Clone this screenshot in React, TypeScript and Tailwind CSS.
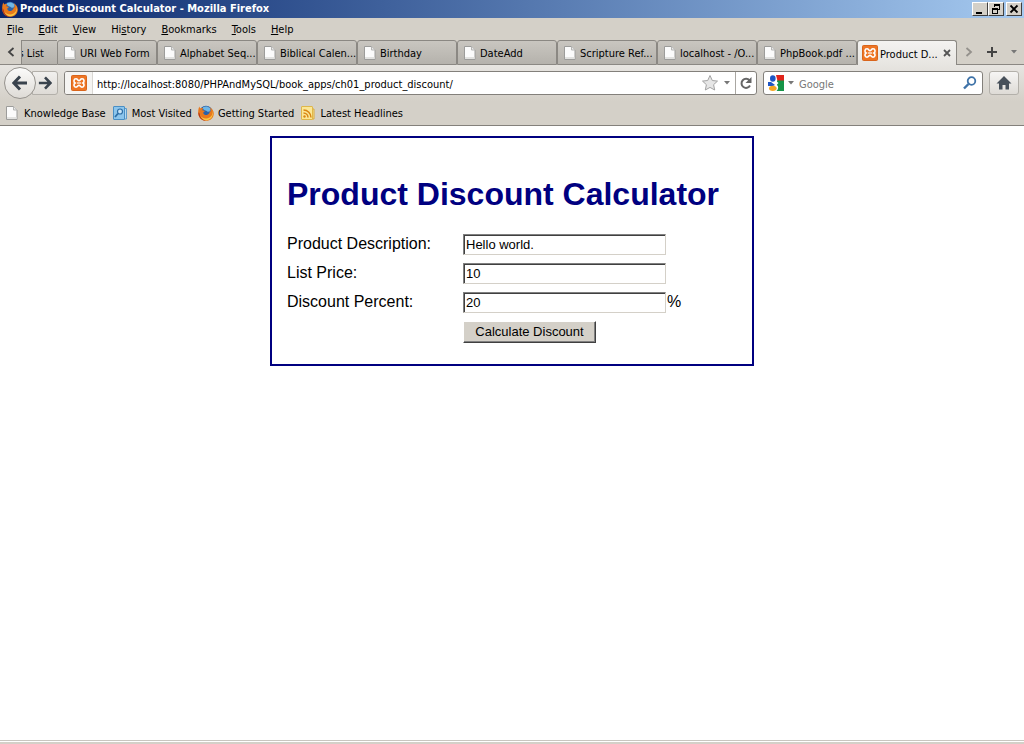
import React, { useState } from "react";

function FirefoxIcon() {
  return (
    <svg viewBox="0 0 16 16" className="size-4 shrink-0" aria-hidden="true">
      <circle cx="8" cy="7.6" r="6.800" fill="#2b62a8" />
      <path d="M5 2.200C7 1 10 1 12 3c1 1.200.8 3-.6 3.600-2 .6-2.400-.8-4-1.200C6 5 4.600 4 5 2.200z" fill="#6fb7e6" />
      <path
        d="M1.300 1.600c.3 1 .7 1.500 1.300 1.900C3.600 3 4.700 3.100 5.200 3.200c-.6.6-.9 1.300-.8 2 .8.300 2 .2 2.600.6-.1.900-1.500 1.100-1.800 1.900.3 1.800 2.400 2.700 4.200 2.100 1.800-.6 2.800-2.400 2.300-4.200.6.400.9.900 1.100 1.500.2-2-.3-3.800-1.500-5.200 2.600 1.200 4.500 3.800 4.500 6.500 0 4.300-3.400 7.400-7.600 7.400C3.800 15.800.4 12.600.2 8.500.1 5.800.4 3.600 1.300 1.600z"
        fill="#e8781c"
      />
      <path d="M14.300 4.200c1.600 4.500-1.300 9-5.800 9.300-3 .2-5.400-1.200-6.500-3.400 1 4 4.300 5.300 6.600 5.200 5-.3 7.900-6 5.700-11.100z" fill="#f9c642" />
      <path d="M.4 7.200c-.3 5 3.400 8.500 7.600 8.600-3.600-1-6-3.400-6.400-7.400z" fill="#b5391a" />
    </svg>
  );
}

function XamppIcon() {
  return (
    <svg viewBox="0 0 16 16" className="size-4 shrink-0" aria-hidden="true">
      <rect x=".5" y=".5" width="15" height="15" rx="1" fill="#ee7524" stroke="#d9651c" />
      <path
        d="M5 3.800c1.800 0 1.800 1.900 3 1.900s1.200-1.900 3-1.900c2.500 0 2.600 3.200.9 4.200 1.700 1 1.600 4.200-.9 4.200-1.800 0-1.800-1.900-3-1.900s-1.200 1.900-3 1.900c-2.500 0-2.600-3.200-.9-4.200-1.700-1-1.600-4.200.9-4.200z"
        fill="none"
        stroke="#fff"
        strokeWidth="1.600"
      />
      <path d="M6 8h4" stroke="#fff" strokeWidth="1.200" />
    </svg>
  );
}

function PageIcon() {
  return (
    <svg viewBox="0 0 16 16" className="size-4 shrink-0" aria-hidden="true">
      <path d="M2.500 1.500h7l3.500 3.500v9.500H2.500z" fill="#fbfbfb" stroke="#9c9c9a" />
      <path d="M3 12h9.500v2H3z" fill="#e2e2e0" />
      <path d="M9.500 1.500V5H13" fill="#e8e8e8" stroke="#b5b5b3" />
    </svg>
  );
}

function MostVisitedIcon() {
  return (
    <svg viewBox="0 0 16 16" className="size-4 shrink-0" aria-hidden="true">
      <path d="M12 3.500h2.500v10.500H12z" fill="#b5d9f2" stroke="#5d9ccb" />
      <rect x="1.500" y="1.500" width="11" height="13" rx=".5" fill="#8cc5ec" stroke="#4a8fc4" />
      <circle cx="8" cy="6.500" r="2.500" fill="#c8e4f7" stroke="#2d6ea6" strokeWidth="1.200" />
      <path d="M6 8.500l-3 3.500" stroke="#2d6ea6" strokeWidth="1.800" />
    </svg>
  );
}

function FeedIcon() {
  return (
    <svg viewBox="0 0 16 16" className="size-4 shrink-0" aria-hidden="true">
      <path d="M12 4h2v10h-2z" fill="#f8e39b" stroke="#d9a93a" />
      <rect x="1.500" y="1.500" width="11" height="13" rx=".5" fill="#fbe796" stroke="#dfb74a" />
      <circle cx="4.500" cy="11.500" r="1.200" fill="#d98512" />
      <path d="M3.500 8a4.500 4.500 0 0 1 4.500 4.500M3.500 5a7.500 7.500 0 0 1 7.500 7.500" fill="none" stroke="#d98512" strokeWidth="1.500" />
    </svg>
  );
}

function GoogleIcon() {
  return (
    <svg viewBox="0 0 16 16" className="size-4 shrink-0" aria-hidden="true">
      <path d="M8 0h8v6H9.500z" fill="#e0241b" />
      <path d="M9 5.500h7V16H8.500c2-2 2.300-4.500.5-6z" fill="#159447" />
      <path d="M0 7h3l4 3-2 1H0z" fill="#1f56c3" />
      <ellipse cx="4.800" cy="3.500" rx="2.800" ry="3.300" fill="#1f56c3" />
      <ellipse cx="4.800" cy="13.300" rx="3.800" ry="2.600" fill="#f5a623" />
      <path d="M7.500 5.500l3 2.500-2 2-2.500-2z" fill="#fff" />
    </svg>
  );
}

function Arrow({ back = false }: { back?: boolean }) {
  return (
    <svg viewBox="0 0 16 16" className={back ? "size-4" : "size-[14px] rotate-180"} aria-hidden="true">
      <path d="M8 1.500L1.800 8 8 14.500M2.500 8H15" fill="none" stroke="#39434d" strokeWidth="3" />
    </svg>
  );
}

function Caret() {
  return (
    <svg viewBox="0 0 6 4" className="h-1 w-[6px] shrink-0" aria-hidden="true">
      <path d="M0 0h6L3 3.500z" fill="#777" />
    </svg>
  );
}

const menus = [
  ["", "F", "ile"],
  ["", "E", "dit"],
  ["", "V", "iew"],
  ["Hi", "s", "tory"],
  ["", "B", "ookmarks"],
  ["", "T", "ools"],
  ["", "H", "elp"],
];

const tabs = [
  "URI Web Form",
  "Alphabet Seq...",
  "Biblical Calen...",
  "Birthday",
  "DateAdd",
  "Scripture Ref...",
  "localhost - /O...",
  "PhpBook.pdf ...",
];

const bookmarks = [
  { label: "Knowledge Base", icon: <PageIcon /> },
  { label: "Most Visited", icon: <MostVisitedIcon /> },
  { label: "Getting Started", icon: <FirefoxIcon /> },
  { label: "Latest Headlines", icon: <FeedIcon /> },
];

const captionButton =
  "flex h-[14px] w-4 items-center justify-center border border-t-white border-l-white border-r-[#404040] border-b-[#404040] bg-[#d4d0c8]";

function TitleBar() {
  return (
    <header className="flex h-[18px] items-center bg-linear-to-r from-[#0a246a] to-[#a6caf0] pr-[2px] pl-[2px]">
      <FirefoxIcon />
      <h2 className="ml-[2px] flex-1 text-[11px] font-bold whitespace-nowrap text-white">
        Product Discount Calculator - Mozilla Firefox
      </h2>
      <button type="button" aria-label="Minimize" className={captionButton}>
        <svg viewBox="0 0 12 12" className="size-3" aria-hidden="true">
          <path d="M2 9h6v2H2z" />
        </svg>
      </button>
      <button type="button" aria-label="Restore" className={captionButton}>
        <svg viewBox="0 0 12 12" className="size-3" shapeRendering="crispEdges" aria-hidden="true">
          <path d="M4 1h6v6H8V6h1V3H5v1H4zM2 5h6v6H2zm1 2v3h4V7z" fillRule="evenodd" />
        </svg>
      </button>
      <button type="button" aria-label="Close" className={`${captionButton} ml-[2px]`}>
        <svg viewBox="0 0 12 12" className="size-3" aria-hidden="true">
          <path d="M2.500 2.500l7 7M9.500 2.500l-7 7" stroke="#000" strokeWidth="1.800" />
        </svg>
      </button>
    </header>
  );
}

const tabShape =
  "flex h-full min-w-0 flex-1 items-center rounded-t-[3px] border-t border-r border-l border-[#8b8883] pl-1 text-left whitespace-nowrap";

function TabStrip() {
  return (
    <div className="flex h-[25px]">
      <button type="button" aria-label="Scroll tabs left" className="flex w-[21px] items-center justify-center border-b border-[#8b8883]">
        <svg viewBox="0 0 8 10" className="h-[10px] w-2" aria-hidden="true">
          <path d="M6.500 1L2 5l4.500 4" fill="none" stroke="#444" strokeWidth="1.800" />
        </svg>
      </button>
      <div role="tablist" className="flex min-w-0 flex-1">
        <button
          type="button"
          role="tab"
          aria-selected={false}
          className="flex h-full w-9 shrink-0 items-center justify-end overflow-hidden border-t border-b border-l border-[#8b8883] bg-linear-to-b from-[#c9c6c0] to-[#b5b2ac] pr-[13px] whitespace-nowrap"
        >
          <span className="mt-[3px]">s List</span>
        </button>
        {tabs.map((t) => (
          <button
            type="button"
            role="tab"
            aria-selected={false}
            key={t}
            className={`${tabShape} border-b bg-linear-to-b from-[#c9c6c0] to-[#b5b2ac]`}
          >
            <PageIcon />
            <span className="mt-[3px] ml-[2px]">{t}</span>
          </button>
        ))}
        <div className={`${tabShape} bg-linear-to-b from-[#f4f3f1] to-[#e7e5e1]`}>
          <button type="button" role="tab" aria-selected={true} className="flex items-center">
            <XamppIcon />
            <span className="mt-[3px] ml-[2px]">Product D...</span>
          </button>
          <button type="button" aria-label="Close tab" className="flex flex-1 items-center justify-center">
            <svg viewBox="0 0 8 8" className="size-2" aria-hidden="true">
              <path d="M1 1l6 6M7 1L1 7" stroke="#555" strokeWidth="1.800" />
            </svg>
          </button>
        </div>
      </div>
      <div className="flex w-[67px] items-center justify-between border-b border-[#8b8883] pr-[7px] pl-2">
        <button type="button" aria-label="Scroll tabs right">
          <svg viewBox="0 0 8 10" className="h-[10px] w-2" aria-hidden="true">
            <path d="M1.500 1L6 5 1.500 9" fill="none" stroke="#94918c" strokeWidth="1.800" />
          </svg>
        </button>
        <button type="button" aria-label="Open a new tab">
          <svg viewBox="0 0 10 10" className="size-[10px]" aria-hidden="true">
            <path d="M5 0v10M0 5h10" stroke="#444" strokeWidth="2" />
          </svg>
        </button>
        <button type="button" aria-label="List all tabs">
          <Caret />
        </button>
      </div>
    </div>
  );
}

function NavBar() {
  const [url, setUrl] = useState("http://localhost:8080/PHPAndMySQL/book_apps/ch01_product_discount/");
  const [query, setQuery] = useState("");
  return (
    <div className="flex h-9 items-center bg-linear-to-b from-[#e7e5e1] to-[#d4d0c8] pr-[5px] pl-1">
      <button
        type="button"
        aria-label="Back"
        className="z-10 flex size-8 shrink-0 items-center justify-center rounded-full border border-[#96938e] bg-linear-to-b from-[#fbfbfa] to-[#dedbd6]"
      >
        <Arrow back />
      </button>
      <button
        type="button"
        aria-label="Forward"
        className="-ml-1 flex h-6 w-[26px] shrink-0 items-center justify-center rounded-r-[3px] border border-[#b3b0aa] bg-linear-to-b from-[#f1f0ee] to-[#dedbd6]"
      >
        <Arrow />
      </button>
      <div className="ml-[6px] flex h-6 min-w-0 flex-1 items-center rounded-[3px] border border-[#83807b] bg-white">
        <div className="flex h-full w-7 shrink-0 items-center justify-center rounded-l-[2px] border-r border-[#d9d7d3] bg-[#f5f4f2]">
          <XamppIcon />
        </div>
        <input
          aria-label="Address"
          value={url}
          onChange={(e) => setUrl(e.target.value)}
          className="h-full min-w-0 flex-1 bg-transparent pt-[2px] pl-1 outline-none"
        />
        <button type="button" aria-label="Bookmark this page">
          <svg viewBox="0 0 18 18" className="size-[18px]" aria-hidden="true">
            <path d="M9 1.500l2.300 5 5.200.6-3.900 3.600 1.100 5.300L9 13.400 4.300 16l1.100-5.300L1.500 7.100l5.200-.6z" fill="#e6e6e6" stroke="#a3a3a3" />
          </svg>
        </button>
        <button type="button" aria-label="Show history" className="flex w-4 justify-center">
          <Caret />
        </button>
        <button type="button" aria-label="Reload" className="flex h-full w-[21px] items-center justify-center border-l border-[#aaa7a2]">
          <svg viewBox="0 0 14 14" className="size-[14px]" aria-hidden="true">
            <path d="M10.500 4.500A4.500 4.500 0 1 0 11 9.500" fill="none" stroke="#666" strokeWidth="2" />
            <path d="M12.500 1v6h-6z" fill="#666" />
          </svg>
        </button>
      </div>
      <div className="ml-[6px] flex h-6 w-[220px] shrink-0 items-center rounded-[3px] border border-[#83807b] bg-white pr-1 pl-1">
        <button type="button" aria-label="Choose search engine" className="flex items-center gap-1">
          <GoogleIcon />
          <Caret />
        </button>
        <input
          aria-label="Search"
          placeholder="Google"
          value={query}
          onChange={(e) => setQuery(e.target.value)}
          className="h-full min-w-0 flex-1 bg-transparent pt-[2px] pl-[5px] outline-none placeholder:text-[#777]"
        />
        <button type="button" aria-label="Search the web">
          <svg viewBox="0 0 16 16" className="size-4" aria-hidden="true">
            <circle cx="9.500" cy="6" r="3.800" fill="none" stroke="#3f73a8" strokeWidth="1.800" />
            <path d="M6.500 9L2 13.500" stroke="#3f73a8" strokeWidth="2.400" />
          </svg>
        </button>
      </div>
      <button
        type="button"
        aria-label="Home"
        className="ml-[6px] flex h-6 w-[30px] shrink-0 items-center justify-center rounded-[3px] border border-[#b3b0aa] bg-linear-to-b from-[#f6f5f4] to-[#dedbd6]"
      >
        <svg viewBox="0 0 16 16" className="size-4" aria-hidden="true">
          <path d="M8 1l7.500 7.500H13V14.500H9.500V10h-3v4.500H3V8.500H.5z" fill="#47505a" />
        </svg>
      </button>
    </div>
  );
}

const inset =
  "h-[21px] w-[203px] border border-t-[#808080] border-l-[#808080] border-r-[#d4d0c8] border-b-[#d4d0c8] bg-white pl-[2px] text-[13px] shadow-[inset_1px_1px_0_#404040] outline-none";

function DiscountForm() {
  const [description, setDescription] = useState("Hello world.");
  const [price, setPrice] = useState("10");
  const [percent, setPercent] = useState("20");
  return (
    <section className="mx-auto mt-[10px] w-full max-w-[484px] border-2 border-[#000080] px-[15px] pt-[38px] pb-[21px] font-['Liberation_Sans',Arial,sans-serif] text-base leading-5 text-black">
      <h1 className="text-[32px] leading-9 font-bold whitespace-nowrap text-[#000080]">Product Discount Calculator</h1>
      <form className="mt-[22px] grid grid-cols-[176px_1fr] gap-y-2" onSubmit={(e) => e.preventDefault()}>
        <label htmlFor="description">Product Description:</label>
        <div className="flex">
          <input id="description" className={inset} value={description} onChange={(e) => setDescription(e.target.value)} />
        </div>
        <label htmlFor="price">List Price:</label>
        <div className="flex">
          <input id="price" className={inset} value={price} onChange={(e) => setPrice(e.target.value)} />
        </div>
        <label htmlFor="percent">Discount Percent:</label>
        <div className="flex gap-[1px]">
          <input id="percent" className={inset} value={percent} onChange={(e) => setPercent(e.target.value)} />
          <span>%</span>
        </div>
        <button
          type="submit"
          className="col-start-2 h-[22px] w-[133px] border border-t-white border-l-white border-r-[#404040] border-b-[#404040] bg-[#d4d0c8] text-[13px] leading-4 whitespace-nowrap shadow-[inset_-1px_-1px_0_#808080]"
        >
          Calculate Discount
        </button>
      </form>
    </section>
  );
}

export default function App() {
  return (
    <div className="flex min-h-screen flex-col bg-white font-['DejaVu_Sans_Condensed','DejaVu_Sans',Tahoma,sans-serif] text-[11px] leading-[14px] text-black">
      <TitleBar />
      <div className="border-b border-[#83807b] bg-[#d4d0c8]">
        <nav aria-label="Menu" className="flex h-[22px] items-center gap-[15px] pt-[2px] pl-[7px]">
          {menus.map(([before, key, after]) => (
            <button type="button" key={before + key + after}>
              {before}
              <u>{key}</u>
              {after}
            </button>
          ))}
        </nav>
        <TabStrip />
        <NavBar />
        <nav aria-label="Bookmarks" className="flex h-6 items-center gap-[6px] pl-1">
          {bookmarks.map((b) => (
            <a href="#" key={b.label} className="flex items-center gap-1 whitespace-nowrap">
              {b.icon}
              <span className="pt-[2px]">{b.label}</span>
            </a>
          ))}
        </nav>
      </div>
      <main className="flex-1">
        <DiscountForm />
      </main>
      <footer className="h-1 border-t border-[#c9c6c0] bg-[#d4d0c8]">
        <div className="h-[1px] bg-white" />
      </footer>
    </div>
  );
}
